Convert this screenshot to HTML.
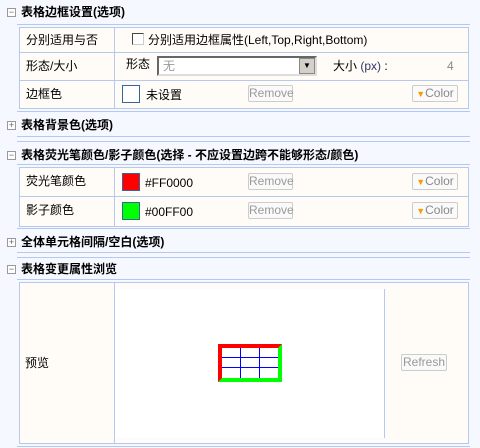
<!DOCTYPE html>
<html><head><meta charset="utf-8"><style>
*{margin:0;padding:0;box-sizing:border-box}
body{width:480px;height:448px;background:#f5f8ff;position:relative;overflow:hidden;font-family:"Liberation Sans","Noto Sans CJK SC",sans-serif;font-size:12px;color:#000}
.a{position:absolute}
.h{position:absolute;left:21px;font-weight:bold;font-size:12px;line-height:14px}
.pm{position:absolute;left:7px;width:9px;height:9px;border:1px solid #999;background:#fff;font-size:9px;line-height:7px;text-align:center;color:#666}
.ln{position:absolute;left:17px;width:453px;height:1px;background:#b4c8f0}
.tb{position:absolute;left:19px;width:450px;border:1px solid #b4c8f0;background:#fffcf7}
.rl{position:absolute;left:0;width:448px;height:1px;background:#b4c8f0}
.vl{position:absolute;left:94px;width:1px;background:#b4c8f0;top:0;bottom:0}
.t{position:absolute;line-height:14px;white-space:nowrap}
.btn{position:absolute;border:1px solid #ccc;border-radius:2px;background:#fafafa;color:#999;font-size:12px;line-height:15px;height:17px;text-align:center}
.sw{position:absolute;width:18px;height:18px;border:1px solid #336699}
</style></head><body>
<div class="pm" style="top:8px">−</div><div class="h" style="top:5px">表格边框设置(选项)</div>
<div class="ln" style="top:24px"></div>
<div class="tb" style="top:27px;height:82px">
 <div class="vl"></div>
 <div class="rl" style="top:24px"></div><div class="rl" style="top:52px"></div>
 <div class="t" style="left:6px;top:5px">分别适用与否</div>
 <div class="a" style="left:112px;top:5px;width:12px;height:12px;border:1px solid #444;border-right-color:#ccc;border-bottom-color:#ccc;background:#fff"></div>
 <div class="t" style="left:128px;top:5px">分别适用边框属性(Left,Top,Right,Bottom)</div>
 <div class="t" style="left:6px;top:31px">形态/大小</div>
 <div class="t" style="left:106px;top:29px">形态</div>
 <div class="a" style="left:137px;top:28px;width:160px;height:20px;border:2px solid #666;border-right-color:#ddd;border-bottom-color:#ddd;background:#fff;color:#999;padding-left:4px;line-height:16px">无
  <div class="a" style="right:0;top:0;width:16px;height:16px;background:#d4d0c8;border:1px solid #888;font-size:8px;text-align:center;line-height:14px;color:#000">▼</div></div>
 <div class="t" style="left:313px;top:31px">大小 <span style="color:#336">(px)</span> :</div>
 <div class="t" style="left:427px;top:31px;color:#888">4</div>
 <div class="t" style="left:6px;top:59px">边框色</div>
 <div class="sw" style="left:102px;top:57px;background:#fff"></div>
 <div class="t" style="left:126px;top:60px">未设置</div>
 <div class="btn" style="left:228px;top:57px;width:45px">Remove</div>
 <div class="btn" style="left:392px;top:57px;width:46px;color:#888"><span style="color:#f90;font-size:9px">▼</span>Color</div>
</div>
<div class="ln" style="top:111px"></div>
<div class="pm" style="top:121px">+</div><div class="h" style="top:118px">表格背景色(选项)</div>
<div class="ln" style="top:136px"></div>
<div class="ln" style="top:141px"></div>
<div class="pm" style="top:151px">−</div><div class="h" style="top:148px">表格荧光笔颜色/影子颜色(选择 - 不应设置边跨不能够形态/颜色)</div>
<div class="ln" style="top:164px"></div>
<div class="tb" style="top:167px;height:60px">
 <div class="vl"></div><div class="rl" style="top:28px"></div>
 <div class="t" style="left:6px;top:6px">荧光笔颜色</div>
 <div class="sw" style="left:102px;top:5px;background:#f00"></div>
 <div class="t" style="left:125px;top:8px">#FF0000</div>
 <div class="btn" style="left:228px;top:5px;width:45px">Remove</div>
 <div class="btn" style="left:392px;top:5px;width:46px;color:#888"><span style="color:#f90;font-size:9px">▼</span>Color</div>
 <div class="t" style="left:6px;top:35px">影子颜色</div>
 <div class="sw" style="left:102px;top:34px;background:#0f0"></div>
 <div class="t" style="left:125px;top:37px">#00FF00</div>
 <div class="btn" style="left:228px;top:34px;width:45px">Remove</div>
 <div class="btn" style="left:392px;top:34px;width:46px;color:#888"><span style="color:#f90;font-size:9px">▼</span>Color</div>
</div>
<div class="ln" style="top:228px"></div>
<div class="pm" style="top:238px">+</div><div class="h" style="top:235px">全体单元格间隔/空白(选项)</div>
<div class="ln" style="top:252px"></div>
<div class="ln" style="top:257px"></div>
<div class="pm" style="top:265px">−</div><div class="h" style="top:262px">表格变更属性浏览</div>
<div class="ln" style="top:279px"></div>
<div class="tb" style="top:282px;height:162px">
 <div class="vl"></div>
 <div class="t" style="left:5px;top:73px">预览</div>
 <div class="a" style="left:95px;top:6px;width:270px;height:149px;background:#fff;border-right:1px solid #b4c8f0">
  <div class="a" style="left:103px;top:55px;width:64px;height:38px;border-style:solid;border-width:4px;border-color:#f00 #0f0 #0f0 #f00;background:#fff">
   <div class="a" style="left:0;right:0;top:9px;height:1px;background:#00f"></div>
   <div class="a" style="left:0;right:0;top:19px;height:1px;background:#00f"></div>
   <div class="a" style="top:0;bottom:0;left:18px;width:1px;background:#00f"></div>
   <div class="a" style="top:0;bottom:0;left:37px;width:1px;background:#00f"></div>
  </div>
 </div>
 <div class="btn" style="left:381px;top:71px;width:46px;height:17px">Refresh</div>
</div>
<div class="ln" style="top:446px"></div>
</body></html>
